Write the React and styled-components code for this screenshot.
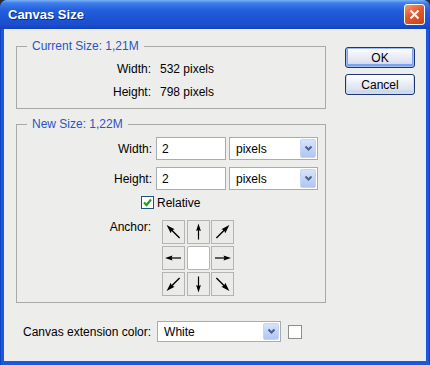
import React from 'react';
import styled, { createGlobalStyle } from 'styled-components';

const GlobalStyle = createGlobalStyle`
  html, body { margin: 0; padding: 0; background: #2a2a2a; }
  body { font-family: "Liberation Sans", Arial, sans-serif; font-size: 12px; color: #000; }
`;

const Window = styled.div`
  width: 430px;
  height: 365px;
  box-sizing: border-box;
  display: flex;
  flex-direction: column;
  background: linear-gradient(to right, #0a2f9e 0, #1b57e0 1px, #1b57e0 calc(100% - 1px), #0a2f9e 100%);
  border-radius: 7px 7px 0 0;
  overflow: hidden;
`;

const TitleBar = styled.div`
  height: 29px;
  flex: none;
  display: flex;
  align-items: center;
  justify-content: space-between;
  padding: 0 5px 0 8px;
  background: linear-gradient(180deg, #7fb2f5 0%, #3f7fec 10%, #245fdc 35%, #1d55d5 60%, #1a4ecf 85%, #1540b8 100%);
`;

const Title = styled.span`
  font-family: "Liberation Sans", Arial, sans-serif;
  font-weight: bold;
  font-size: 13px;
  color: #fff;
  text-shadow: 1px 1px 0 #0b2b8a;
`;

const CloseButton = styled.div`
  width: 19px;
  height: 19px;
  border: 1px solid #fff;
  border-radius: 3px;
  background: linear-gradient(150deg, #f39a7c 0%, #e2582e 45%, #c94418 100%);
  display: flex;
  align-items: center;
  justify-content: center;
`;

const Client = styled.div`
  flex: 1;
  margin: 0 4px 4px;
  background: #ededec;
  display: flex;
  padding: 10px 0 0 12px;
`;

const MainColumn = styled.div`
  width: 310px;
  display: flex;
  flex-direction: column;
`;

const Group = styled.fieldset`
  margin: ${p => p.$top || 0}px 0 0;
  padding: 0;
  border: 1px solid #a9a9a6;
  height: ${p => p.$height}px;
  box-sizing: border-box;
  min-width: 0;
`;

const Legend = styled.legend`
  margin-left: 10px;
  padding: 0 5px;
  color: #2856c2;
  font-size: 12px;
  line-height: 14px;
`;

const InfoRow = styled.div`
  display: grid;
  grid-template-columns: 134px auto;
  column-gap: 9px;
  align-items: center;
  height: 23px;
  margin-top: ${p => p.$top || 0}px;
`;

const Label = styled.span`
  text-align: right;
  white-space: nowrap;
  align-self: ${p => p.$align || 'center'};
`;

const FieldRow = styled.div`
  display: grid;
  grid-template-columns: 134px 70px 89px;
  column-gap: 4px;
  align-items: center;
  height: 23px;
  margin-top: ${p => p.$top || 0}px;
  & > span { margin-right: -1px; }
  & > input { margin-left: 1px; }
`;

const TextInput = styled.input`
  box-sizing: border-box;
  width: 70px;
  height: 23px;
  border: 1px solid #a5acb2;
  background: #fff;
  font: inherit;
  font-size: 12px;
  padding: 0 5px;
  outline: none;
`;

const Select = styled.div`
  box-sizing: border-box;
  width: ${p => p.$width}px;
  height: ${p => p.$height || 23}px;
  border: 1px solid #a5acb2;
  background: #fff;
  display: flex;
  align-items: center;
  justify-content: space-between;
  padding: 0 1px 0 6px;
`;

const DropButton = styled.div`
  width: 16px;
  height: ${p => p.$height || 19}px;
  box-sizing: border-box;
  border: 1px solid #c6d5f5;
  border-radius: 2px;
  background: linear-gradient(180deg, #d8e4fd 0%, #c2d4f8 50%, #b0c5f2 100%);
  display: flex;
  align-items: center;
  justify-content: center;
`;

const CheckRow = styled.div`
  display: flex;
  align-items: center;
  gap: 3px;
  padding-left: 124px;
  margin-top: 6px;
  height: 13px;
`;

const CheckBox = styled.div`
  width: 13px;
  height: 13px;
  box-sizing: border-box;
  border: 1px solid #1c5180;
  background: #fff;
  display: flex;
  align-items: center;
  justify-content: center;
`;

const AnchorRow = styled.div`
  display: grid;
  grid-template-columns: 134px auto;
  column-gap: 11px;
  margin-top: 11px;
`;

const AnchorGrid = styled.div`
  display: grid;
  grid-template-columns: repeat(3, 23px);
  grid-template-rows: repeat(3, 24px);
  column-gap: 1.5px;
  row-gap: 2px;
`;

const AnchorCell = styled.div`
  box-sizing: border-box;
  border: 1px solid #b4b4b0;
  background: ${p => (p.$active ? '#fff' : '#ebebea')};
  border-radius: ${p => (p.$active ? '2px' : '0')};
  display: flex;
  align-items: center;
  justify-content: center;
`;

const BottomRow = styled.div`
  display: flex;
  align-items: center;
  margin-top: 18px;
  padding-left: 7px;
  height: 21px;
`;

const BottomLabel = styled.span`
  margin-right: 6px;
  white-space: nowrap;
`;

const Swatch = styled.div`
  width: 14px;
  height: 14px;
  box-sizing: border-box;
  border: 1px solid #8e8e8e;
  background: #fff;
  margin-left: 7px;
`;

const ButtonColumn = styled.div`
  display: flex;
  flex-direction: column;
  gap: 6px;
  margin: 8px 0 0 19px;
`;

const Button = styled.div`
  width: 70px;
  height: 21px;
  box-sizing: border-box;
  border: 1px solid #1d3774;
  border-radius: 3px;
  background: linear-gradient(180deg, #ffffff 0%, #eef1f8 35%, #dbe2f2 75%, #bfcae6 100%);
  box-shadow: ${p => (p.$default ? 'inset 0 0 0 1px #9fbdf2, inset 0 -1px 0 2px #7ea3ea' : 'inset 0 -1px 0 1px #d2dbee')};
  display: flex;
  align-items: center;
  justify-content: center;
  font-size: 12px;
`;

const Chevron = () => (
  <svg width="9" height="7" viewBox="0 0 9 7">
    <path d="M1.5 1.5 L4.5 4.5 L7.5 1.5" fill="none" stroke="#4d6185" strokeWidth="2" />
  </svg>
);

// one upward arrow, turned for each of the eight anchor directions
const Arrow = ({ angle }) => {
  const diag = angle % 90 !== 0;
  const s = diag ? 1.15 : 1;
  return (
    <svg width="21" height="22" viewBox="-10.5 -11 21 22">
      <g transform={`rotate(${angle}) scale(${s})`}>
        <rect x="-0.6" y="-3" width="1.2" height="10.5" fill="#000" />
        <polygon points="0,-8.5 -2.4,-1 0,-2 2.4,-1" fill="#000" />
      </g>
    </svg>
  );
};

const anchors = [-45, 0, 45, -90, null, 90, -135, 180, 135];

export default function App() {
  return (
    <>
      <GlobalStyle />
      <Window>
        <TitleBar>
          <Title>Canvas Size</Title>
          <CloseButton>
            <svg width="11" height="11" viewBox="0 0 11 11">
              <path d="M1.5 1.5 L9.5 9.5 M9.5 1.5 L1.5 9.5" stroke="#fff" strokeWidth="2.2" />
            </svg>
          </CloseButton>
        </TitleBar>
        <Client>
          <MainColumn>
            <Group $height={70}>
              <Legend>Current Size: 1,21M</Legend>
              <InfoRow $top={4}>
                <Label>Width:</Label>
                <span>532 pixels</span>
              </InfoRow>
              <InfoRow>
                <Label>Height:</Label>
                <span>798 pixels</span>
              </InfoRow>
            </Group>
            <Group $top={8} $height={186}>
              <Legend>New Size: 1,22M</Legend>
              <FieldRow $top={6}>
                <Label>Width:</Label>
                <TextInput defaultValue="2" />
                <Select $width={89}>
                  <span>pixels</span>
                  <DropButton><Chevron /></DropButton>
                </Select>
              </FieldRow>
              <FieldRow $top={7}>
                <Label>Height:</Label>
                <TextInput defaultValue="2" />
                <Select $width={89}>
                  <span>pixels</span>
                  <DropButton><Chevron /></DropButton>
                </Select>
              </FieldRow>
              <CheckRow>
                <CheckBox>
                  <svg width="9" height="9" viewBox="0 0 9 9">
                    <path d="M1 4.5 L3.5 7 L8 1.5" fill="none" stroke="#21a121" strokeWidth="2.2" />
                  </svg>
                </CheckBox>
                <span>Relative</span>
              </CheckRow>
              <AnchorRow>
                <Label $align="start">Anchor:</Label>
                <AnchorGrid>
                  {anchors.map((a, i) => (
                    <AnchorCell key={i} $active={a === null}>
                      {a !== null && <Arrow angle={a} />}
                    </AnchorCell>
                  ))}
                </AnchorGrid>
              </AnchorRow>
            </Group>
            <BottomRow>
              <BottomLabel>Canvas extension color:</BottomLabel>
              <Select $width={124} $height={21}>
                <span>White</span>
                <DropButton $height={17}><Chevron /></DropButton>
              </Select>
              <Swatch />
            </BottomRow>
          </MainColumn>
          <ButtonColumn>
            <Button $default>OK</Button>
            <Button>Cancel</Button>
          </ButtonColumn>
        </Client>
      </Window>
    </>
  );
}
